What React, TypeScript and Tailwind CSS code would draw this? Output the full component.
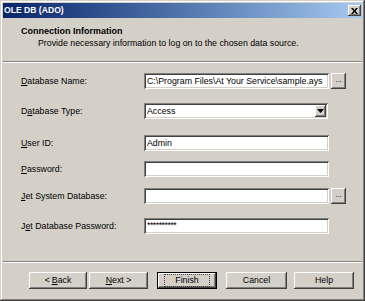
import React from "react";

const font = { fontFamily: '"Liberation Sans", Arial, sans-serif' };

function Sunken({ children, className = "" }: { children?: React.ReactNode; className?: string }) {
  return (
    <div
      className={
        "h-[16px] bg-white shadow-[inset_1px_1px_#808080,inset_-1px_-1px_#ffffff,inset_2px_2px_#404040,inset_-2px_-2px_#d4d0c8] flex items-center pl-[3px] text-[8.8px] text-black leading-none " +
        className
      }
    >
      {children}
    </div>
  );
}

function Raised({ children, className = "" }: { children?: React.ReactNode; className?: string }) {
  return (
    <div
      className={
        "bg-[#d4d0c8] shadow-[inset_-1px_-1px_#404040,inset_1px_1px_#ffffff,inset_-2px_-2px_#808080,inset_2px_2px_#d4d0c8] flex items-center justify-center " +
        className
      }
    >
      {children}
    </div>
  );
}

function Row({
  label,
  children,
  className = "",
}: {
  label: React.ReactNode;
  children: React.ReactNode;
  className?: string;
}) {
  return (
    <div className={"flex items-center h-[16px] " + className}>
      <div className="w-[141px] pl-[18px] text-[8.8px] text-black leading-none">{label}</div>
      {children}
    </div>
  );
}

export default function App() {
  return (
    <div
      className="w-[365px] h-[301px] bg-[#d4d0c8] p-[3px] flex flex-col shadow-[inset_-1px_-1px_#404040,inset_1px_1px_#d4d0c8,inset_-2px_-2px_#808080,inset_2px_2px_#ffffff] overflow-hidden"
      style={font}
    >
      {/* Title bar */}
      <div className="h-[15px] bg-gradient-to-r from-[#0a246a] to-[#a6caf0] flex items-center justify-between pl-[1px] pr-[1px] shrink-0">
        <span className="text-white font-bold text-[8.6px] leading-none">OLE DB (ADO)</span>
        <Raised className="w-[13px] h-[11px]">
          <svg width="7" height="6" viewBox="0 0 7 6">
            <path d="M0 0h2l1.5 2 1.5-2h2L4.5 3 7 6H5L3.5 4 2 6H0l2.5-3z" fill="#000" />
          </svg>
        </Raised>
      </div>

      {/* Header */}
      <div className="h-[43px] shrink-0 pl-[18px] pt-[8px] text-black">
        <div className="font-bold text-[9px] leading-[11px]">Connection Information</div>
        <div className="text-[8.8px] leading-[12px] pl-[17px]">
          Provide necessary information to log on to the chosen data source.
        </div>
      </div>
      <div className="h-[1px] bg-[#808080] shrink-0" />
      <div className="h-[1px] bg-white shrink-0" />

      {/* Form */}
      <div className="flex flex-col flex-1">
        <Row
          className="mt-[10px]"
          label={
            <>
              <span className="underline">D</span>atabase Name:
            </>
          }
        >
          <Sunken className="w-[185px]">C:\Program Files\At Your Service\sample.ays</Sunken>
          <Raised className="w-[15px] h-[16px] ml-[2px] text-[8px] leading-none">
            <span className="-mt-[3px]">...</span>
          </Raised>
        </Row>
        <Row
          className="mt-[14px]"
          label={
            <>
              D<span className="underline">a</span>tabase Type:
            </>
          }
        >
          <Sunken className="w-[184px] pr-[2px] justify-between">
            <span>Access</span>
            <Raised className="w-[11px] h-[12px]">
              <svg width="7" height="4" viewBox="0 0 7 4">
                <path d="M0 0h7L3.5 4z" fill="#000" />
              </svg>
            </Raised>
          </Sunken>
        </Row>
        <Row
          className="mt-[16px]"
          label={
            <>
              <span className="underline">U</span>ser ID:
            </>
          }
        >
          <Sunken className="w-[185px]">Admin</Sunken>
        </Row>
        <Row
          className="mt-[10px]"
          label={
            <>
              <span className="underline">P</span>assword:
            </>
          }
        >
          <Sunken className="w-[185px]" />
        </Row>
        <Row
          className="mt-[11px]"
          label={
            <>
              <span className="underline">J</span>et System Database:
            </>
          }
        >
          <Sunken className="w-[185px]" />
          <Raised className="w-[15px] h-[16px] ml-[2px] text-[8px] leading-none">
            <span className="-mt-[3px]">...</span>
          </Raised>
        </Row>
        <Row
          className="mt-[14px]"
          label={
            <>
              J<span className="underline">e</span>t Database Password:
            </>
          }
        >
          <Sunken className="w-[185px] items-start pt-[3px] text-[6px] tracking-[-0.5px]">**********</Sunken>
        </Row>
      </div>

      <div className="h-[1px] bg-[#808080] shrink-0" />
      <div className="h-[1px] bg-white shrink-0" />

      {/* Buttons */}
      <div className="h-[35px] shrink-0 flex items-start pt-[9px] pl-[26px] text-[8.8px] text-black leading-none">
        <Raised className="w-[58px] h-[17px]">
          &lt; <span className="underline ml-[2px]">B</span>ack
        </Raised>
        <Raised className="w-[59px] h-[17px] ml-[2px]">
          <span className="underline">N</span>ext &gt;
        </Raised>
        <div className="w-[60px] h-[17px] ml-[9px] border border-black">
          <Raised className="w-full h-full">
            <span className="border border-dotted border-[#404040] px-[10px] py-[1px]">Finish</span>
          </Raised>
        </div>
        <Raised className="w-[61px] h-[17px] ml-[9px]">Cancel</Raised>
        <Raised className="w-[60px] h-[17px] ml-[7px]">Help</Raised>
      </div>
    </div>
  );
}
